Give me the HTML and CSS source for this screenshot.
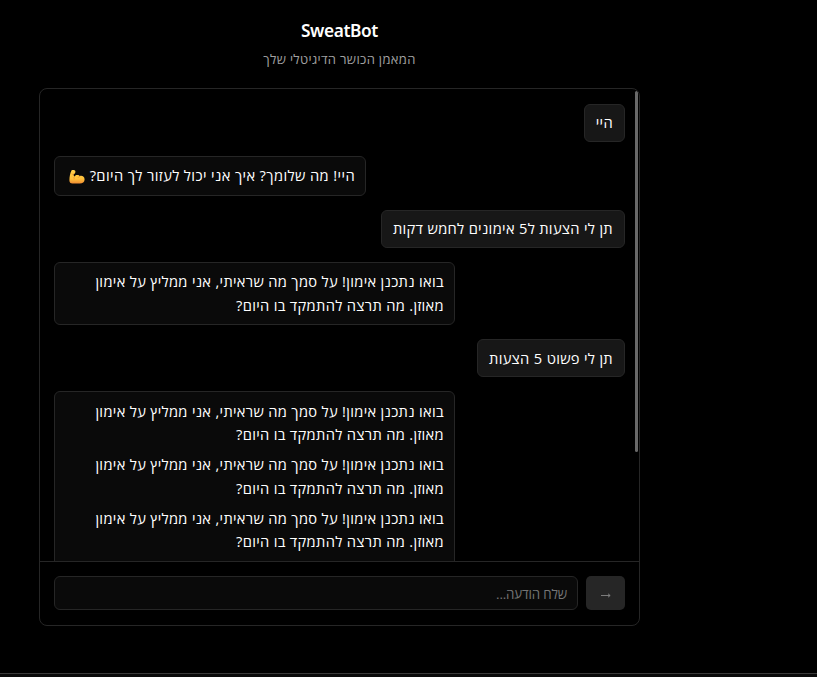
FILE: index.html
```html
<!DOCTYPE html>
<html lang="he">
<head>
<meta charset="utf-8">
<title>SweatBot</title>
<link rel="stylesheet" href="styles.css">
</head>
<body>
<main class="app">
  <header class="header">
    <h1 class="title">SweatBot</h1>
    <p class="subtitle" dir="rtl">המאמן הכושר הדיגיטלי שלך</p>
  </header>
  <section class="chat">
    <div class="messages">
      <div class="bubble user" dir="rtl"><p>היי</p></div>
      <div class="bubble bot greeting" dir="rtl"><p>היי! מה שלומך? איך אני יכול לעזור לך היום? <svg class="emoji" viewBox="0 0 16 16" aria-hidden="true"><defs><linearGradient id="skin" x1="0" y1="0" x2="0" y2="1"><stop offset="0" stop-color="#ffd04a"/><stop offset=".65" stop-color="#ffc13b"/><stop offset="1" stop-color="#ef8b32"/></linearGradient></defs><path fill="url(#skin)" d="M2.600 1.300C3.800.8 5.800.9 6.300 2c.4 1-.2 2.500-1.100 3l-.7.300.6 2.500c.7-1.300 1.900-1.900 3.200-1.900 1.200 0 2.100.4 2.600 1.100 2.300-.7 4.700.6 4.700 3.500 0 2.500-2 4-4.800 4H3.500C1.400 14.500.3 13.200.4 11.200.5 7.800 1.100 4.100 2.600 1.300Z"/><path fill="none" stroke="#e98a2c" stroke-width=".7" stroke-linecap="round" d="M3 5.100c.6.400 1.100.4 1.700.1M4.900 8.300c.3.600.4 1 .3 1.600M10.700 7.400c-.7.200-1.100.5-1.400 1"/></svg></p></div>
      <div class="bubble user" dir="rtl"><p>תן לי הצעות ל5 אימונים לחמש דקות</p></div>
      <div class="bubble bot wide" dir="rtl">
        <p>בואו נתכנן אימון! על סמך מה שראיתי, אני ממליץ על אימון<br>מאוזן. מה תרצה להתמקד בו היום?</p>
      </div>
      <div class="bubble user last" dir="rtl"><p>תן לי פשוט 5 הצעות</p></div>
      <div class="bubble bot wide long" dir="rtl">
        <p>בואו נתכנן אימון! על סמך מה שראיתי, אני ממליץ על אימון<br>מאוזן. מה תרצה להתמקד בו היום?</p>
        <p>בואו נתכנן אימון! על סמך מה שראיתי, אני ממליץ על אימון<br>מאוזן. מה תרצה להתמקד בו היום?</p>
        <p>בואו נתכנן אימון! על סמך מה שראיתי, אני ממליץ על אימון<br>מאוזן. מה תרצה להתמקד בו היום?</p>
      </div>
      <div class="scrollbar"></div>
    </div>
    <div class="composer">
      <div class="input" dir="rtl">שלח הודעה...</div>
      <div class="send"><svg class="arrow" viewBox="0 0 12 7" aria-hidden="true"><path d="M1 3.500h9M8 1.800 10.200 3.500 8 5.200"/></svg></div>
    </div>
  </section>
</main>
<footer class="footer"></footer>
</body>
</html>
```
FILE: styles.css
```css
* { box-sizing: border-box; }
html, body { height: 100%; }
body {
  margin: 0;
  display: flex;
  flex-direction: column;
  overflow: hidden;
  background: #000;
  color: #fff;
  font-family: "Open Sans", "Noto Sans", sans-serif;
}
h1, p { margin: 0; }
.app { width: 601px; margin-left: 39px; flex: 1; }
.header { height: 88px; padding-top: 18px; text-align: center; }
.title { font-family: "Noto Sans", sans-serif; font-size: 17.3px; line-height: 26px; font-weight: 600; letter-spacing: -0.4px; }
.subtitle { margin-top: 5px; font-size: 13px; line-height: 20px; letter-spacing: 0.33px; color: #a1a1a1; }
.chat {
  height: 538px;
  display: flex;
  flex-direction: column;
  border: 1px solid #262626;
  border-radius: 8px;
  overflow: hidden;
}
.messages {
  position: relative;
  height: 472px;
  padding: 15px 14px 0;
  display: flex;
  flex-direction: column;
  gap: 14px;
  overflow: hidden;
}
.bubble {
  flex: none;
  padding: 6px 11px 0;
  border: 1px solid #262626;
  border-radius: 6px;
  font-size: 14.7px;
  line-height: 23.6px;
  letter-spacing: 0.31px;
  white-space: nowrap;
}
.bubble p + p { margin-top: 6.2px; }
.user { align-self: flex-end; height: 38px; background: #171717; }
.last { padding-top: 7px; }
.bot { align-self: flex-start; padding-right: 10px; background: #0a0a0a; }
.greeting { width: 312px; height: 40px; padding-top: 7px; letter-spacing: 0.38px; }
.wide { width: 401px; height: 63px; padding-top: 7px; }
.long { height: 190px; padding-top: 7.9px; }
.emoji { width: 16px; height: 16px; vertical-align: -4px; }
.scrollbar {
  position: absolute;
  top: 2px;
  right: 1px;
  width: 3px;
  height: 361px;
  border-radius: 2px;
  background: #686868;
}
.composer {
  flex: 1;
  display: flex;
  gap: 8px;
  padding: 14px 14px 0;
  border-top: 1px solid #262626;
}
.input {
  flex: 1;
  height: 34px;
  padding: 0 10px;
  border: 1px solid #262626;
  border-radius: 6px;
  background: #0a0a0a;
  color: #757575;
  font-size: 13.3px;
  line-height: 34px;
  letter-spacing: -0.15px;
}
.send {
  width: 39px;
  height: 34px;
  display: flex;
  align-items: center;
  justify-content: center;
  padding-top: 5px;
  border-radius: 5px;
  background: #262626;
}
.arrow { width: 12px; height: 7px; fill: none; stroke: #858585; stroke-width: 0.9; }
.footer { height: 4px; border-top: 1px solid #3a3a3a; background: #0a0a0a; }
```
